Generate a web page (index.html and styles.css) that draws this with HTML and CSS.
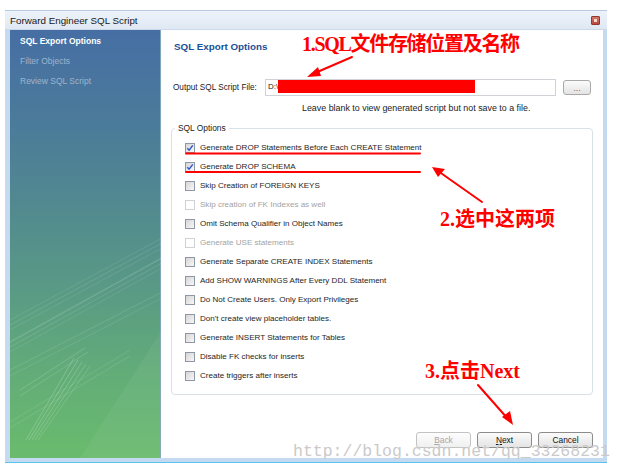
FILE: index.html
```html
<!DOCTYPE html>
<html lang="en">
<head>
<meta charset="utf-8">
<title>Forward Engineer SQL Script</title>
<link rel="stylesheet" href="styles.css">
</head>
<body>
<div class="window">
  <div class="titlebar">
    <span class="title">Forward Engineer SQL Script</span>
    <span class="close"><span class="close-x"></span></span>
  </div>
  <div class="main">
    <nav class="sidebar">
      <svg class="streaks" width="152" height="428" viewBox="0 0 152 428">
        <g stroke="#ffffff" fill="none">
          <path d="M0 290 L152 208" stroke-opacity="0.10" stroke-width="1"/>
          <path d="M0 295 L152 213" stroke-opacity="0.12" stroke-width="1"/>
          <path d="M0 300 L152 218" stroke-opacity="0.10" stroke-width="1"/>
          <path d="M0 312 L152 228" stroke-opacity="0.14" stroke-width="1.5"/>
          <path d="M0 317 L152 233" stroke-opacity="0.12" stroke-width="1"/>
          <path d="M0 322 L152 238" stroke-opacity="0.10" stroke-width="1"/>
          <path d="M0 340 L152 262" stroke-opacity="0.12" stroke-width="1"/>
          <path d="M0 346 L152 268" stroke-opacity="0.10" stroke-width="1"/>
          <path d="M0 392 L120 320" stroke-opacity="0.10" stroke-width="1"/>
          <path d="M0 398 L120 326" stroke-opacity="0.12" stroke-width="1"/>
          <path d="M16 410 L64 328" stroke-opacity="0.20" stroke-width="1"/>
          <path d="M19 410 L68 330" stroke-opacity="0.22" stroke-width="1"/>
          <path d="M22 410 L72 332" stroke-opacity="0.20" stroke-width="1"/>
          <path d="M25 410 L76 334" stroke-opacity="0.18" stroke-width="1"/>
          <path d="M28 410 L80 336" stroke-opacity="0.14" stroke-width="1"/>
          <path d="M10 360 L75 318" stroke-opacity="0.16" stroke-width="1"/>
          <path d="M10 366 L78 322" stroke-opacity="0.14" stroke-width="1"/>
        </g>
        <path d="M70 428 L152 300 L152 428 Z" fill="#ffffff" fill-opacity="0.05"/>
      </svg>
      <div class="nav-item active">SQL Export Options</div>
      <div class="nav-item">Filter Objects</div>
      <div class="nav-item">Review SQL Script</div>
    </nav>
    <section class="content">
      <h1 class="page-title">SQL Export Options</h1>
      <div class="file-row">
        <span class="file-label">Output SQL Script File:</span>
        <div class="file-input"><span class="path">D:\</span><span class="redact"></span></div>
        <button class="btn browse">...</button>
      </div>
      <p class="hint">Leave blank to view generated script but not save to a file.</p>
      <div class="group">
        <span class="group-label">SQL Options</span>
        <div class="opt checked"><span class="box"><svg width="8" height="8" viewBox="0 0 8 8"><path d="M1.3 4.2 L3.1 6.2 L6.8 1.3" stroke="#2b57c8" stroke-width="1.4" fill="none"/></svg></span>Generate DROP Statements Before Each CREATE Statement</div>
        <div class="opt checked"><span class="box"><svg width="8" height="8" viewBox="0 0 8 8"><path d="M1.3 4.2 L3.1 6.2 L6.8 1.3" stroke="#2b57c8" stroke-width="1.4" fill="none"/></svg></span>Generate DROP SCHEMA</div>
        <div class="opt"><span class="box"></span>Skip Creation of FOREIGN KEYS</div>
        <div class="opt disabled"><span class="box"></span>Skip creation of FK Indexes as well</div>
        <div class="opt"><span class="box"></span>Omit Schema Qualifier in Object Names</div>
        <div class="opt disabled"><span class="box"></span>Generate USE statements</div>
        <div class="opt"><span class="box"></span>Generate Separate CREATE INDEX Statements</div>
        <div class="opt"><span class="box"></span>Add SHOW WARNINGS After Every DDL Statement</div>
        <div class="opt"><span class="box"></span>Do Not Create Users. Only Export Privileges</div>
        <div class="opt"><span class="box"></span>Don't create view placeholder tables.</div>
        <div class="opt"><span class="box"></span>Generate INSERT Statements for Tables</div>
        <div class="opt"><span class="box"></span>Disable FK checks for inserts</div>
        <div class="opt"><span class="box"></span>Create triggers after inserts</div>
      </div>
      <div class="buttons">
        <button class="btn nav-btn" disabled><u>B</u>ack</button>
        <button class="btn nav-btn"><u>N</u>ext</button>
        <button class="btn nav-btn">Cancel</button>
      </div>
    </section>
  </div>
</div>

<div class="note note1">1.SQL文件存储位置及名称</div>
<div class="note note2">2.选中这两项</div>
<div class="note note3">3.点击Next</div>
<svg class="arrows" width="624" height="471" viewBox="0 0 624 471">
  <g stroke="#ff0000" stroke-width="2" fill="none" stroke-linecap="round">
    <path d="M352 57 L315 73"/>
    <path d="M186 153.5 L420 153.5"/>
    <path d="M186 172 L420 172"/>
    <path d="M482 202 L438 171"/>
    <path d="M478 385 L508 419"/>
  </g>
  <g fill="#ff0000">
    <path d="M307 77 L318 67 L321 76 Z"/>
    <path d="M432 167 L445 169 L438 177 Z"/>
    <path d="M513 425 L502 417 L510 411 Z"/>
  </g>
</svg>
<div class="watermark">http://blog.csdn.net/qq_33268231</div>
</body>
</html>
```

FILE: styles.css
```css
* { box-sizing: border-box; }
html, body { margin: 0; padding: 0; background: #ffffff; }
body {
  width: 624px;
  height: 471px;
  position: relative;
  overflow: hidden;
  font-family: "Liberation Sans", Arial, sans-serif;
}

.window {
  margin: 10px 0 0 5px;
  width: 602px;
  height: 453px;
  background: #c4daf1;
  border-top: 1px solid #b7c9de;
  border-bottom: 1px solid #5cc3ee;
  display: flex;
  flex-direction: column;
}

.titlebar {
  height: 19px;
  background: linear-gradient(#eef3fa, #dfe8f3);
  display: flex;
  align-items: center;
  justify-content: space-between;
  padding: 0 7px 0 5px;
  border-bottom: 1px solid #ccd9e8;
}
.title {
  font-size: 9.8px;
  color: #1a1a1a;
}
.close {
  width: 9px;
  height: 9px;
  background: linear-gradient(#d77a6a, #b9493a);
  border: 1px solid #8e3a30;
  border-radius: 1px;
  display: flex;
  align-items: center;
  justify-content: center;
}
.close-x {
  width: 3px;
  height: 3px;
  background: #f3d6d0;
}

.main {
  display: flex;
  height: 428px;
  margin: 0 4px 0 5px;
}

.sidebar {
  width: 152px;
  position: relative;
  padding-top: 1px;
  background: linear-gradient(#466ea4 0%, #4b7b9a 22%, #528a8f 42%, #5a9b84 62%, #63ae77 82%, #6abb6d 100%);
  border-right: 1px solid #7fa6b8;
}
.streaks {
  position: absolute;
  left: 0;
  top: 0;
}
.nav-item {
  position: relative;
  height: 20px;
  line-height: 20px;
  padding-left: 10px;
  font-size: 8.5px;
  color: rgba(225, 234, 242, 0.55);
}
.nav-item.active {
  font-weight: bold;
  color: #ffffff;
}

.content {
  flex: 1;
  background: #ffffff;
  display: flex;
  flex-direction: column;
  padding: 11px 10px 0 10px;
}

.page-title {
  margin: 0 0 0 3px;
  height: 12px;
  line-height: 12px;
  font-size: 9.8px;
  font-weight: bold;
  color: #1c4f97;
}

.file-row {
  margin-top: 26px;
  display: flex;
  align-items: center;
  height: 17px;
}
.file-label {
  font-size: 8.2px;
  color: #222;
  width: 94px;
  padding-left: 2px;
}
.file-input {
  width: 291px;
  height: 17px;
  border: 1px solid #cfd3d7;
  display: flex;
  align-items: flex-start;
  padding-left: 2px;
}
.path {
  font-size: 8px;
  color: #222;
  line-height: 13px;
  width: 10px;
}
.redact {
  width: 197px;
  height: 13px;
  background: #ff0000;
}

.btn {
  font-family: "Liberation Sans", Arial, sans-serif;
  font-size: 8.4px;
  color: #111;
  background: linear-gradient(#fbfbfb, #e4e4e4);
  border: 1px solid #8c8c8c;
  border-radius: 3px;
  padding: 0;
}
.browse {
  margin-left: 7px;
  width: 28px;
  height: 15px;
  color: #666;
  line-height: 8px;
  border-color: #a9a9a9;
}

.hint {
  margin: 6px 0 0 131px;
  height: 12px;
  line-height: 12px;
  font-size: 8.9px;
  color: #222;
}

.group {
  position: relative;
  margin-top: 14px;
  width: 422px;
  height: 267px;
  border: 1px solid #d9e1e8;
  border-radius: 4px;
  padding: 9px 0 0 13px;
}
.group-label {
  position: absolute;
  left: 3px;
  top: -7px;
  padding: 0 3px;
  background: #ffffff;
  font-size: 8.4px;
  line-height: 12px;
  color: #222;
}

.opt {
  height: 19px;
  display: flex;
  align-items: center;
  gap: 5px;
  font-size: 8.05px;
  color: #1e1e1e;
}
.box {
  width: 10px;
  height: 10px;
  flex: none;
  border: 1px solid #8d98a4;
  background: linear-gradient(135deg, #d6d6d6, #f7f7f7);
  display: flex;
  align-items: center;
  justify-content: center;
}
.opt.disabled { color: #a3a3a3; }
.opt.disabled .box {
  border-color: #cdd3d9;
  background: #ffffff;
}

.buttons {
  margin-top: 37px;
  display: flex;
  justify-content: flex-end;
  gap: 6px;
}
.nav-btn {
  width: 55px;
  height: 16px;
}
.nav-btn[disabled] {
  color: #a7a7a7;
  border-color: #c3c3c3;
  background: linear-gradient(#fdfdfd, #f0f0f0);
}

.note {
  position: absolute;
  color: #ff0000;
  font-family: "Liberation Serif", "Noto Sans CJK SC", serif;
  font-weight: bold;
  font-size: 20px;
  line-height: 22px;
  white-space: nowrap;
}
.note1 { left: 302px; top: 33px; letter-spacing: -1.3px; }
.note2 { left: 440px; top: 208px; }
.note3 { left: 425px; top: 360px; }

.arrows {
  position: absolute;
  left: 0;
  top: 0;
}

.watermark {
  position: absolute;
  left: 293px;
  top: 443px;
  font-family: "Liberation Mono", "Courier New", monospace;
  font-size: 16.5px;
  line-height: 18px;
  color: #cacaca;
  white-space: nowrap;
}
```
